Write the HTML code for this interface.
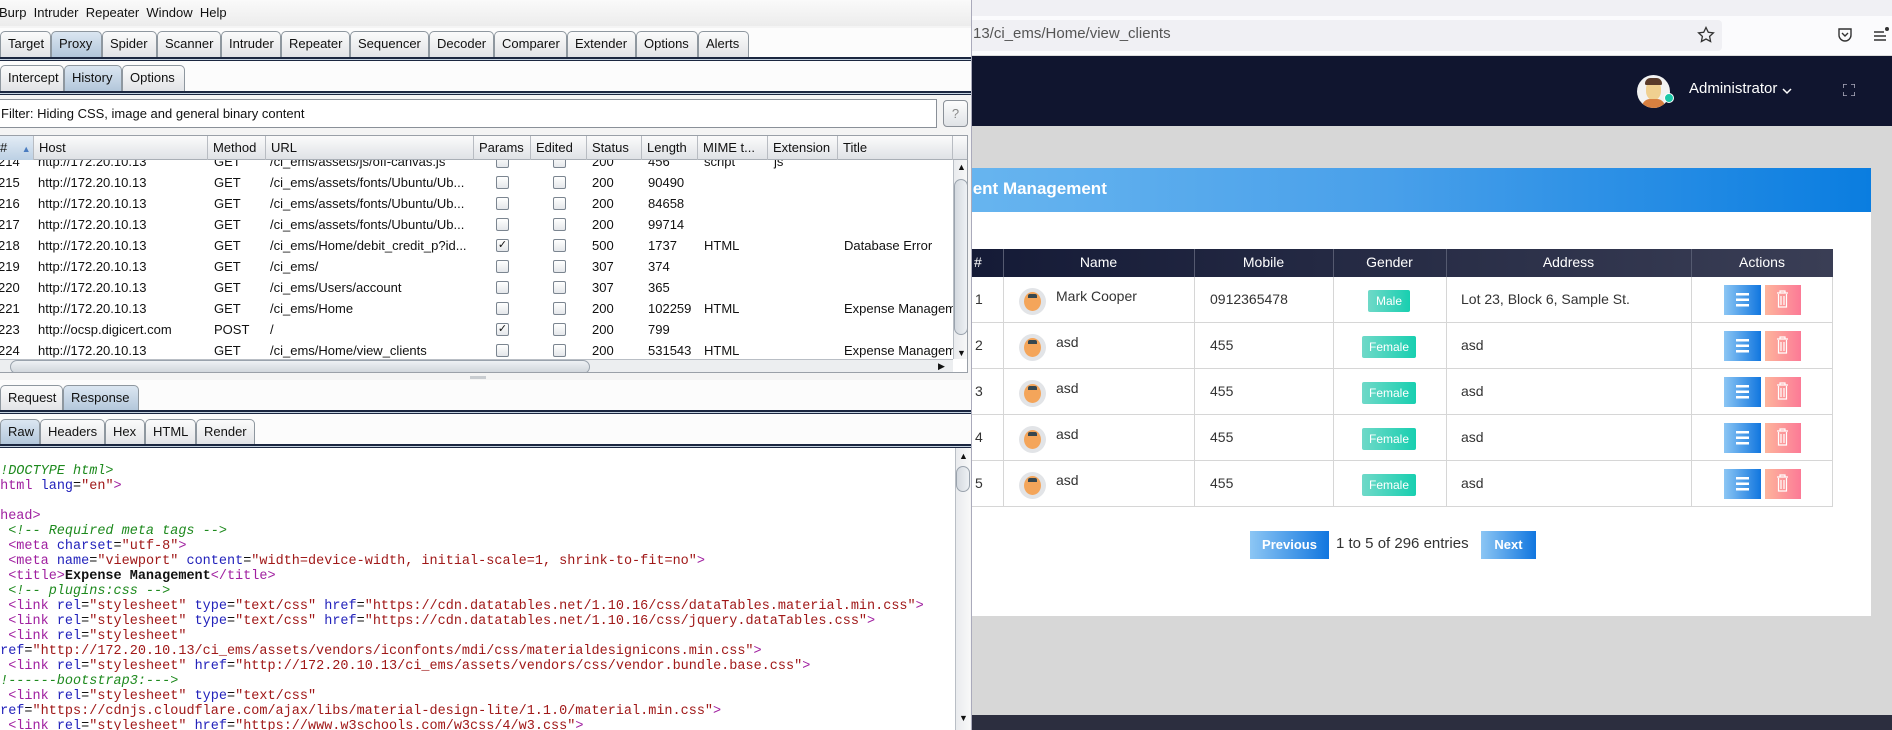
<!DOCTYPE html>
<html><head><meta charset="utf-8">
<style>
*{margin:0;padding:0;box-sizing:border-box}
body{width:1892px;height:730px;overflow:hidden;position:relative;background:#d7d7d7;font-family:"Liberation Sans",sans-serif}
.a{position:absolute}
#burp{position:absolute;left:0;top:0;width:972px;height:730px;background:#f4f4f4;overflow:hidden;z-index:5;font-size:13px;color:#111;border-right:1px solid #aab}
.tab{position:absolute;height:26px;border:1px solid #8e979f;border-bottom:none;border-radius:5px 5px 0 0;background:linear-gradient(#fbfbfb,#e1e3e6);padding:4px 0 0 7px;white-space:nowrap}
.tab.sel{background:linear-gradient(#dbe6f1,#b2c6da)}
.dl{position:absolute;left:0;width:972px;height:4px;border-top:2px solid #1b2740;border-bottom:1px solid #1b2740;background:#c5d3e1}
.th{position:absolute;top:0;height:24px;border-right:1px solid #b8bcc2;padding:4px 0 0 5px;white-space:nowrap;overflow:hidden}
.cb{position:absolute;width:13px;height:13px;border:1px solid #7b8590;border-radius:2px;background:linear-gradient(#fff,#e4e7ea)}
.row{position:absolute;left:0;width:953px;height:21px;white-space:nowrap}
.row span{position:absolute;top:3px}
pre{font-family:"Liberation Mono",monospace;font-size:13.5px;line-height:15px}
.c{color:#1e8a1e;font-style:italic}.t{color:#a020a0}.n{color:#2222bb}.v{color:#a01818}.b{font-weight:bold}
.brow{position:absolute;left:960px;width:873px;height:46px;border-bottom:1px solid #d6d6d6;background:#fff}
.vl{position:absolute;top:0;width:1px;height:46px;background:#d6d6d6}
.cell{position:absolute;font-size:14px;color:#333}
.av{position:absolute;width:27px;height:27px;border-radius:50%;background:#e2e4e7}
.av:after{content:"";position:absolute;left:5px;top:4px;width:17px;height:19px;border-radius:50%;background:#f4a55a}
.av:before{content:"";position:absolute;left:9px;top:6px;width:9px;height:4px;background:#37474f;z-index:1;border-radius:2px 2px 0 0}
.badge{position:absolute;height:22px;border-radius:2px;background:linear-gradient(90deg,#6fd9c8,#18cfb0);color:#fff;font-size:12px;text-align:center;line-height:22px}
.bb{position:absolute;width:37px;height:30px;background:linear-gradient(90deg,#8cc6f4,#1176df)}
.bp{position:absolute;width:36px;height:30px;background:linear-gradient(90deg,#fdb59c,#fc7a96)}
</style></head><body>

<!-- Browser -->
<div class="a" style="left:0;top:0;width:1892px;height:16px;background:#f0f0f4"></div>
<div class="a" style="left:0;top:16px;width:1892px;height:40px;background:#fbfbfd;border-bottom:1px solid #ddd"></div>
<div class="a" style="left:900px;top:20px;width:822px;height:31px;background:#f0f0f4;border-radius:4px"></div>
<div class="a" style="left:973px;top:25px;font-size:15px;color:#555">13/ci_ems/Home/view_clients</div>
<svg class="a" style="left:1697px;top:26px" width="18" height="18" viewBox="0 0 18 18"><path d="M9 1.5l2.3 4.8 5.1.6-3.8 3.5 1 5.1L9 13l-4.6 2.5 1-5.1-3.8-3.5 5.1-.6z" fill="none" stroke="#333" stroke-width="1.3"/></svg>
<svg class="a" style="left:1837px;top:27px" width="16" height="16" viewBox="0 0 16 16"><path d="M2 2h12v6a6 6 0 0 1-12 0z M5 6l3 3 3-3" fill="none" stroke="#333" stroke-width="1.4"/></svg>
<svg class="a" style="left:1872px;top:26px" width="18" height="18" viewBox="0 0 18 18"><path d="M2 6h10M2 10h12M2 14h12" stroke="#333" stroke-width="1.5"/><circle cx="15" cy="3" r="2" fill="#333"/></svg>

<div class="a" style="left:0;top:56px;width:1892px;height:70px;background:#10152f"></div>
<div class="a" style="left:1637px;top:75px;width:33px;height:33px;border-radius:50%;background:#f2f2f2;overflow:hidden"><div class="a" style="left:9px;top:5px;width:15px;height:20px;border-radius:45%;background:#f0d090"></div><div class="a" style="left:8px;top:3px;width:17px;height:7px;border-radius:8px 8px 2px 2px;background:#5a3b2a"></div><div class="a" style="left:5px;top:24px;width:23px;height:10px;border-radius:8px 8px 0 0;background:#d88040"></div></div>
<div class="a" style="left:1664px;top:93px;width:10px;height:10px;border-radius:50%;background:#1bc8a8;border:1px solid #fff"></div>
<div class="a" style="left:1689px;top:80px;font-size:15px;color:#fff">Administrator</div>
<svg class="a" style="left:1782px;top:87px" width="10" height="8"><path d="M1 2l4 4 4-4" fill="none" stroke="#fff" stroke-width="1.5"/></svg>
<svg class="a" style="left:1843px;top:84px" width="12" height="12"><path d="M0 4V0h4M8 0h4v4M12 8v4H8M4 12H0V8" fill="none" stroke="#aab" stroke-width="1.6"/></svg>

<!-- card -->
<div class="a" style="left:900px;top:168px;width:971px;height:448px;background:#fff"></div>
<div class="a" style="left:900px;top:168px;width:971px;height:44px;background:linear-gradient(90deg,#6cb8f0,#49a0ea 50%,#0a7de0)"></div>
<div class="a" style="left:951px;top:179px;font-size:17px;font-weight:bold;color:#fff">Client Management</div>

<div class="a" style="left:960px;top:249px;width:873px;height:28px;background:linear-gradient(90deg,#141a36,#3a3e55);color:#fff;font-size:14px">
<span class="a" style="left:14px;top:5px">#</span>
<span class="a" style="left:43px;width:191px;top:5px;text-align:center">Name</span>
<span class="a" style="left:234px;width:139px;top:5px;text-align:center">Mobile</span>
<span class="a" style="left:373px;width:113px;top:5px;text-align:center">Gender</span>
<span class="a" style="left:486px;width:245px;top:5px;text-align:center">Address</span>
<span class="a" style="left:731px;width:142px;top:5px;text-align:center">Actions</span>
<div class="a" style="left:43px;top:0;width:1px;height:28px;background:#555a70"></div><div class="a" style="left:234px;top:0;width:1px;height:28px;background:#555a70"></div><div class="a" style="left:373px;top:0;width:1px;height:28px;background:#555a70"></div><div class="a" style="left:486px;top:0;width:1px;height:28px;background:#555a70"></div><div class="a" style="left:731px;top:0;width:1px;height:28px;background:#555a70"></div>
</div>

<div class="brow" style="top:277px"><div class="vl" style="left:43px"></div><div class="vl" style="left:234px"></div><div class="vl" style="left:373px"></div><div class="vl" style="left:486px"></div><div class="vl" style="left:731px"></div><div class="vl" style="left:872px"></div>
<span class="cell" style="left:15px;top:14px">1</span><div class="av" style="left:59px;top:11px"></div><span class="cell" style="left:96px;top:11px">Mark Cooper</span><span class="cell" style="left:250px;top:14px">0912365478</span><div class="badge" style="left:408px;top:13px;width:42px">Male</div><span class="cell" style="left:501px;top:14px">Lot 23, Block 6, Sample St.</span><div class="bb" style="left:764px;top:8px"></div><div class="bp" style="left:805px;top:8px"></div></div>
<div class="brow" style="top:323px"><div class="vl" style="left:43px"></div><div class="vl" style="left:234px"></div><div class="vl" style="left:373px"></div><div class="vl" style="left:486px"></div><div class="vl" style="left:731px"></div><div class="vl" style="left:872px"></div>
<span class="cell" style="left:15px;top:14px">2</span><div class="av" style="left:59px;top:11px"></div><span class="cell" style="left:96px;top:11px">asd</span><span class="cell" style="left:250px;top:14px">455</span><div class="badge" style="left:402px;top:13px;width:54px">Female</div><span class="cell" style="left:501px;top:14px">asd</span><div class="bb" style="left:764px;top:8px"></div><div class="bp" style="left:805px;top:8px"></div></div>
<div class="brow" style="top:369px"><div class="vl" style="left:43px"></div><div class="vl" style="left:234px"></div><div class="vl" style="left:373px"></div><div class="vl" style="left:486px"></div><div class="vl" style="left:731px"></div><div class="vl" style="left:872px"></div>
<span class="cell" style="left:15px;top:14px">3</span><div class="av" style="left:59px;top:11px"></div><span class="cell" style="left:96px;top:11px">asd</span><span class="cell" style="left:250px;top:14px">455</span><div class="badge" style="left:402px;top:13px;width:54px">Female</div><span class="cell" style="left:501px;top:14px">asd</span><div class="bb" style="left:764px;top:8px"></div><div class="bp" style="left:805px;top:8px"></div></div>
<div class="brow" style="top:415px"><div class="vl" style="left:43px"></div><div class="vl" style="left:234px"></div><div class="vl" style="left:373px"></div><div class="vl" style="left:486px"></div><div class="vl" style="left:731px"></div><div class="vl" style="left:872px"></div>
<span class="cell" style="left:15px;top:14px">4</span><div class="av" style="left:59px;top:11px"></div><span class="cell" style="left:96px;top:11px">asd</span><span class="cell" style="left:250px;top:14px">455</span><div class="badge" style="left:402px;top:13px;width:54px">Female</div><span class="cell" style="left:501px;top:14px">asd</span><div class="bb" style="left:764px;top:8px"></div><div class="bp" style="left:805px;top:8px"></div></div>
<div class="brow" style="top:461px"><div class="vl" style="left:43px"></div><div class="vl" style="left:234px"></div><div class="vl" style="left:373px"></div><div class="vl" style="left:486px"></div><div class="vl" style="left:731px"></div><div class="vl" style="left:872px"></div>
<span class="cell" style="left:15px;top:14px">5</span><div class="av" style="left:59px;top:11px"></div><span class="cell" style="left:96px;top:11px">asd</span><span class="cell" style="left:250px;top:14px">455</span><div class="badge" style="left:402px;top:13px;width:54px">Female</div><span class="cell" style="left:501px;top:14px">asd</span><div class="bb" style="left:764px;top:8px"></div><div class="bp" style="left:805px;top:8px"></div></div>

<!-- action icons -->
<svg class="a" style="left:0;top:0;z-index:1" width="1892" height="730">
<g fill="#fff">
<rect x="1736" y="293" width="13" height="2.5"/><rect x="1736" y="298.5" width="13" height="2.5"/><rect x="1736" y="304" width="13" height="2.5"/>
<rect x="1736" y="339" width="13" height="2.5"/><rect x="1736" y="344.5" width="13" height="2.5"/><rect x="1736" y="350" width="13" height="2.5"/>
<rect x="1736" y="385" width="13" height="2.5"/><rect x="1736" y="390.5" width="13" height="2.5"/><rect x="1736" y="396" width="13" height="2.5"/>
<rect x="1736" y="431" width="13" height="2.5"/><rect x="1736" y="436.5" width="13" height="2.5"/><rect x="1736" y="442" width="13" height="2.5"/>
<rect x="1736" y="477" width="13" height="2.5"/><rect x="1736" y="482.5" width="13" height="2.5"/><rect x="1736" y="488" width="13" height="2.5"/>
</g>
<g fill="none" stroke="#fff" stroke-width="1.2">
<path d="M1777 293h11M1780 293v-2h5v2M1778.5 294v13h8v-13M1781 296v9M1784 296v9"/>
<path d="M1777 339h11M1780 339v-2h5v2M1778.5 340v13h8v-13M1781 342v9M1784 342v9"/>
<path d="M1777 385h11M1780 385v-2h5v2M1778.5 386v13h8v-13M1781 388v9M1784 388v9"/>
<path d="M1777 431h11M1780 431v-2h5v2M1778.5 432v13h8v-13M1781 434v9M1784 434v9"/>
<path d="M1777 477h11M1780 477v-2h5v2M1778.5 478v13h8v-13M1781 480v9M1784 480v9"/>
</g></svg>

<div class="a" style="left:1250px;top:531px;width:79px;height:28px;background:linear-gradient(90deg,#8cc6f4,#1176df);color:#fff;font-weight:bold;font-size:13px;text-align:center;line-height:28px">Previous</div>
<div class="a" style="left:1336px;top:535px;font-size:15px;color:#333">1 to 5 of 296 entries</div>
<div class="a" style="left:1481px;top:531px;width:55px;height:28px;background:linear-gradient(90deg,#8cc6f4,#1176df);color:#fff;font-weight:bold;font-size:13px;text-align:center;line-height:28px">Next</div>
<div class="a" style="left:0;top:715px;width:1892px;height:15px;background:#2c2e3f"></div>

<!-- Burp -->
<div id="burp">
<div class="a" style="left:0;top:0;width:972px;height:26px;background:linear-gradient(#fafafa,#ececec)"></div>
<div class="a" style="left:-1px;top:5px;white-space:nowrap">Burp&nbsp; Intruder&nbsp; Repeater&nbsp; Window&nbsp; Help</div>
<div class="a" style="left:0;top:28px;width:972px;height:32px;background:#fcfcfc"></div>
<div class="tab" style="left:0;top:31px;width:51px">Target</div>
<div class="tab sel" style="left:51px;top:31px;width:51px">Proxy</div>
<div class="tab" style="left:102px;top:31px;width:55px">Spider</div>
<div class="tab" style="left:157px;top:31px;width:64px">Scanner</div>
<div class="tab" style="left:221px;top:31px;width:60px">Intruder</div>
<div class="tab" style="left:281px;top:31px;width:69px">Repeater</div>
<div class="tab" style="left:350px;top:31px;width:79px">Sequencer</div>
<div class="tab" style="left:429px;top:31px;width:65px">Decoder</div>
<div class="tab" style="left:494px;top:31px;width:73px">Comparer</div>
<div class="tab" style="left:567px;top:31px;width:69px">Extender</div>
<div class="tab" style="left:636px;top:31px;width:62px">Options</div>
<div class="tab" style="left:698px;top:31px;width:51px">Alerts</div>
<div class="dl" style="top:57px"></div>
<div class="a" style="left:0;top:61px;width:972px;height:32px;background:#fcfcfc"></div>
<div class="tab" style="left:0;top:65px;width:64px">Intercept</div>
<div class="tab sel" style="left:64px;top:65px;width:58px">History</div>
<div class="tab" style="left:122px;top:65px;width:63px">Options</div>
<div class="dl" style="top:91px"></div>
<div class="a" style="left:-2px;top:99px;width:939px;height:29px;border:1px solid #8a9098;background:#fff;padding:6px 0 0 2px">Filter: Hiding CSS, image and general binary content</div>
<div class="a" style="left:943px;top:100px;width:25px;height:27px;border:1px solid #8a9098;border-radius:4px;background:linear-gradient(#fdfdfd,#dfe2e6);color:#888;text-align:center;padding-top:5px">?</div>

<div class="a" style="left:0;top:135px;width:968px;height:238px;border:1px solid #9aa0a8;border-left:none;background:#fff;overflow:hidden">
 <div class="a" style="left:0;top:0;width:968px;height:24px;background:linear-gradient(#fbfbfb,#dfe2e6);border-bottom:1px solid #a9afb6"></div>
 <div class="th" style="left:0;width:34px;background:linear-gradient(#e3ecf5,#bcd0e4);padding-left:0">#&nbsp;&nbsp;&nbsp;&nbsp;<span style="color:#4a7cc0;font-size:9px">▲</span></div>
 <div class="th" style="left:34px;width:174px">Host</div>
 <div class="th" style="left:208px;width:58px">Method</div>
 <div class="th" style="left:266px;width:208px">URL</div>
 <div class="th" style="left:474px;width:57px">Params</div>
 <div class="th" style="left:531px;width:56px">Edited</div>
 <div class="th" style="left:587px;width:55px">Status</div>
 <div class="th" style="left:642px;width:56px">Length</div>
 <div class="th" style="left:698px;width:70px">MIME t...</div>
 <div class="th" style="left:768px;width:70px">Extension</div>
 <div class="th" style="left:838px;width:115px">Title</div>
 <div class="a" style="left:0;top:24px;width:953px;height:199px;overflow:hidden">
  <div class="row" style="top:-9px"><span style="left:-2px">214</span><span style="left:38px">http://172.20.10.13</span><span style="left:214px">GET</span><span style="left:270px">/ci_ems/assets/js/off-canvas.js</span><div class="cb" style="left:496px;top:4px"></div><div class="cb" style="left:553px;top:4px"></div><span style="left:592px">200</span><span style="left:648px">456</span><span style="left:704px">script</span><span style="left:774px">js</span></div>
  <div class="row" style="top:12px"><span style="left:-2px">215</span><span style="left:38px">http://172.20.10.13</span><span style="left:214px">GET</span><span style="left:270px">/ci_ems/assets/fonts/Ubuntu/Ub...</span><div class="cb" style="left:496px;top:4px"></div><div class="cb" style="left:553px;top:4px"></div><span style="left:592px">200</span><span style="left:648px">90490</span></div>
  <div class="row" style="top:33px"><span style="left:-2px">216</span><span style="left:38px">http://172.20.10.13</span><span style="left:214px">GET</span><span style="left:270px">/ci_ems/assets/fonts/Ubuntu/Ub...</span><div class="cb" style="left:496px;top:4px"></div><div class="cb" style="left:553px;top:4px"></div><span style="left:592px">200</span><span style="left:648px">84658</span></div>
  <div class="row" style="top:54px"><span style="left:-2px">217</span><span style="left:38px">http://172.20.10.13</span><span style="left:214px">GET</span><span style="left:270px">/ci_ems/assets/fonts/Ubuntu/Ub...</span><div class="cb" style="left:496px;top:4px"></div><div class="cb" style="left:553px;top:4px"></div><span style="left:592px">200</span><span style="left:648px">99714</span></div>
  <div class="row" style="top:75px"><span style="left:-2px">218</span><span style="left:38px">http://172.20.10.13</span><span style="left:214px">GET</span><span style="left:270px">/ci_ems/Home/debit_credit_p?id...</span><div class="cb" style="left:496px;top:4px;font-size:11px;line-height:11px;text-align:center">✓</div><div class="cb" style="left:553px;top:4px"></div><span style="left:592px">500</span><span style="left:648px">1737</span><span style="left:704px">HTML</span><span style="left:844px">Database Error</span></div>
  <div class="row" style="top:96px"><span style="left:-2px">219</span><span style="left:38px">http://172.20.10.13</span><span style="left:214px">GET</span><span style="left:270px">/ci_ems/</span><div class="cb" style="left:496px;top:4px"></div><div class="cb" style="left:553px;top:4px"></div><span style="left:592px">307</span><span style="left:648px">374</span></div>
  <div class="row" style="top:117px"><span style="left:-2px">220</span><span style="left:38px">http://172.20.10.13</span><span style="left:214px">GET</span><span style="left:270px">/ci_ems/Users/account</span><div class="cb" style="left:496px;top:4px"></div><div class="cb" style="left:553px;top:4px"></div><span style="left:592px">307</span><span style="left:648px">365</span></div>
  <div class="row" style="top:138px"><span style="left:-2px">221</span><span style="left:38px">http://172.20.10.13</span><span style="left:214px">GET</span><span style="left:270px">/ci_ems/Home</span><div class="cb" style="left:496px;top:4px"></div><div class="cb" style="left:553px;top:4px"></div><span style="left:592px">200</span><span style="left:648px">102259</span><span style="left:704px">HTML</span><span style="left:844px">Expense Management</span></div>
  <div class="row" style="top:159px"><span style="left:-2px">223</span><span style="left:38px">http://ocsp.digicert.com</span><span style="left:214px">POST</span><span style="left:270px">/</span><div class="cb" style="left:496px;top:4px;font-size:11px;line-height:11px;text-align:center">✓</div><div class="cb" style="left:553px;top:4px"></div><span style="left:592px">200</span><span style="left:648px">799</span></div>
  <div class="row" style="top:180px"><span style="left:-2px">224</span><span style="left:38px">http://172.20.10.13</span><span style="left:214px">GET</span><span style="left:270px">/ci_ems/Home/view_clients</span><div class="cb" style="left:496px;top:4px"></div><div class="cb" style="left:553px;top:4px"></div><span style="left:592px">200</span><span style="left:648px">531543</span><span style="left:704px">HTML</span><span style="left:844px">Expense Management</span></div>
 </div>
 <div class="a" style="left:953px;top:24px;width:15px;height:199px;background:linear-gradient(90deg,#e9ebee,#f8f8f8);border-left:1px solid #b9bec5"><div class="a" style="left:0;top:19px;width:14px;height:156px;border-radius:7px;background:linear-gradient(90deg,#d4d9df,#eef1f4);border:1px solid #9aa3ad"></div><div class="a" style="left:3px;top:2px;font-size:9px">▲</div><div class="a" style="left:3px;top:188px;font-size:9px">▼</div></div>
 <div class="a" style="left:0;top:223px;width:953px;height:15px;background:#eceef0;border-top:1px solid #b9bec5"><div class="a" style="left:10px;top:0;width:580px;height:14px;border-radius:7px;background:linear-gradient(#eef1f4,#cfd5db);border:1px solid #9aa3ad"></div><div class="a" style="left:938px;top:1px;font-size:9px">▶</div></div>
</div>
<div class="a" style="left:470px;top:376px;width:16px;height:3px;background:#c8ccd0"></div>
<div class="a" style="left:0;top:380px;width:972px;height:34px;background:#fcfcfc"></div>
<div class="tab" style="left:0;top:385px;width:63px">Request</div>
<div class="tab sel" style="left:63px;top:385px;width:76px">Response</div>
<div class="dl" style="top:410px"></div>
<div class="a" style="left:0;top:414px;width:972px;height:32px;background:#fcfcfc"></div>
<div class="tab sel" style="left:0;top:419px;width:40px">Raw</div>
<div class="tab" style="left:40px;top:419px;width:65px">Headers</div>
<div class="tab" style="left:105px;top:419px;width:40px">Hex</div>
<div class="tab" style="left:145px;top:419px;width:51px">HTML</div>
<div class="tab" style="left:196px;top:419px;width:59px">Render</div>
<div class="dl" style="top:444px"></div>
<div class="a" style="left:0;top:448px;width:955px;height:282px;background:#fff;overflow:hidden">
<pre class="a" style="left:-8px;top:16px">
<span class="c">&lt;!DOCTYPE html&gt;</span>
<span class="t">&lt;html</span> <span class="n">lang</span>=<span class="v">"en"</span><span class="t">&gt;</span>

<span class="t">&lt;head&gt;</span>
  <span class="c">&lt;!-- Required meta tags --&gt;</span>
  <span class="t">&lt;meta</span> <span class="n">charset</span>=<span class="v">"utf-8"</span><span class="t">&gt;</span>
  <span class="t">&lt;meta</span> <span class="n">name</span>=<span class="v">"viewport"</span> <span class="n">content</span>=<span class="v">"width=device-width, initial-scale=1, shrink-to-fit=no"</span><span class="t">&gt;</span>
  <span class="t">&lt;title&gt;</span><span class="b">Expense Management</span><span class="t">&lt;/title&gt;</span>
  <span class="c">&lt;!-- plugins:css --&gt;</span>
  <span class="t">&lt;link</span> <span class="n">rel</span>=<span class="v">"stylesheet"</span> <span class="n">type</span>=<span class="v">"text/css"</span> <span class="n">href</span>=<span class="v">"https://cdn.datatables.net/1.10.16/css/dataTables.material.min.css"</span><span class="t">&gt;</span>
  <span class="t">&lt;link</span> <span class="n">rel</span>=<span class="v">"stylesheet"</span> <span class="n">type</span>=<span class="v">"text/css"</span> <span class="n">href</span>=<span class="v">"https://cdn.datatables.net/1.10.16/css/jquery.dataTables.css"</span><span class="t">&gt;</span>
  <span class="t">&lt;link</span> <span class="n">rel</span>=<span class="v">"stylesheet"</span>
<span class="n">href</span>=<span class="v">"http://172.20.10.13/ci_ems/assets/vendors/iconfonts/mdi/css/materialdesignicons.min.css"</span><span class="t">&gt;</span>
  <span class="t">&lt;link</span> <span class="n">rel</span>=<span class="v">"stylesheet"</span> <span class="n">href</span>=<span class="v">"http://172.20.10.13/ci_ems/assets/vendors/css/vendor.bundle.base.css"</span><span class="t">&gt;</span>
<span class="c">&lt;!------bootstrap3:---&gt;</span>
  <span class="t">&lt;link</span> <span class="n">rel</span>=<span class="v">"stylesheet"</span> <span class="n">type</span>=<span class="v">"text/css"</span>
<span class="n">href</span>=<span class="v">"https://cdnjs.cloudflare.com/ajax/libs/material-design-lite/1.1.0/material.min.css"</span><span class="t">&gt;</span>
  <span class="t">&lt;link</span> <span class="n">rel</span>=<span class="v">"stylesheet"</span> <span class="n">href</span>=<span class="v">"https://www.w3schools.com/w3css/4/w3.css"</span><span class="t">&gt;</span>
</pre>
</div>
<div class="a" style="left:955px;top:448px;width:15px;height:282px;background:linear-gradient(90deg,#e9ebee,#f8f8f8);border-left:1px solid #b9bec5"><div class="a" style="left:0;top:18px;width:14px;height:26px;border-radius:7px;background:linear-gradient(90deg,#d4d9df,#eef1f4);border:1px solid #9aa3ad"></div><div class="a" style="left:3px;top:3px;font-size:9px">▲</div><div class="a" style="left:3px;top:265px;font-size:9px">▼</div></div>
</div>
</body></html>
